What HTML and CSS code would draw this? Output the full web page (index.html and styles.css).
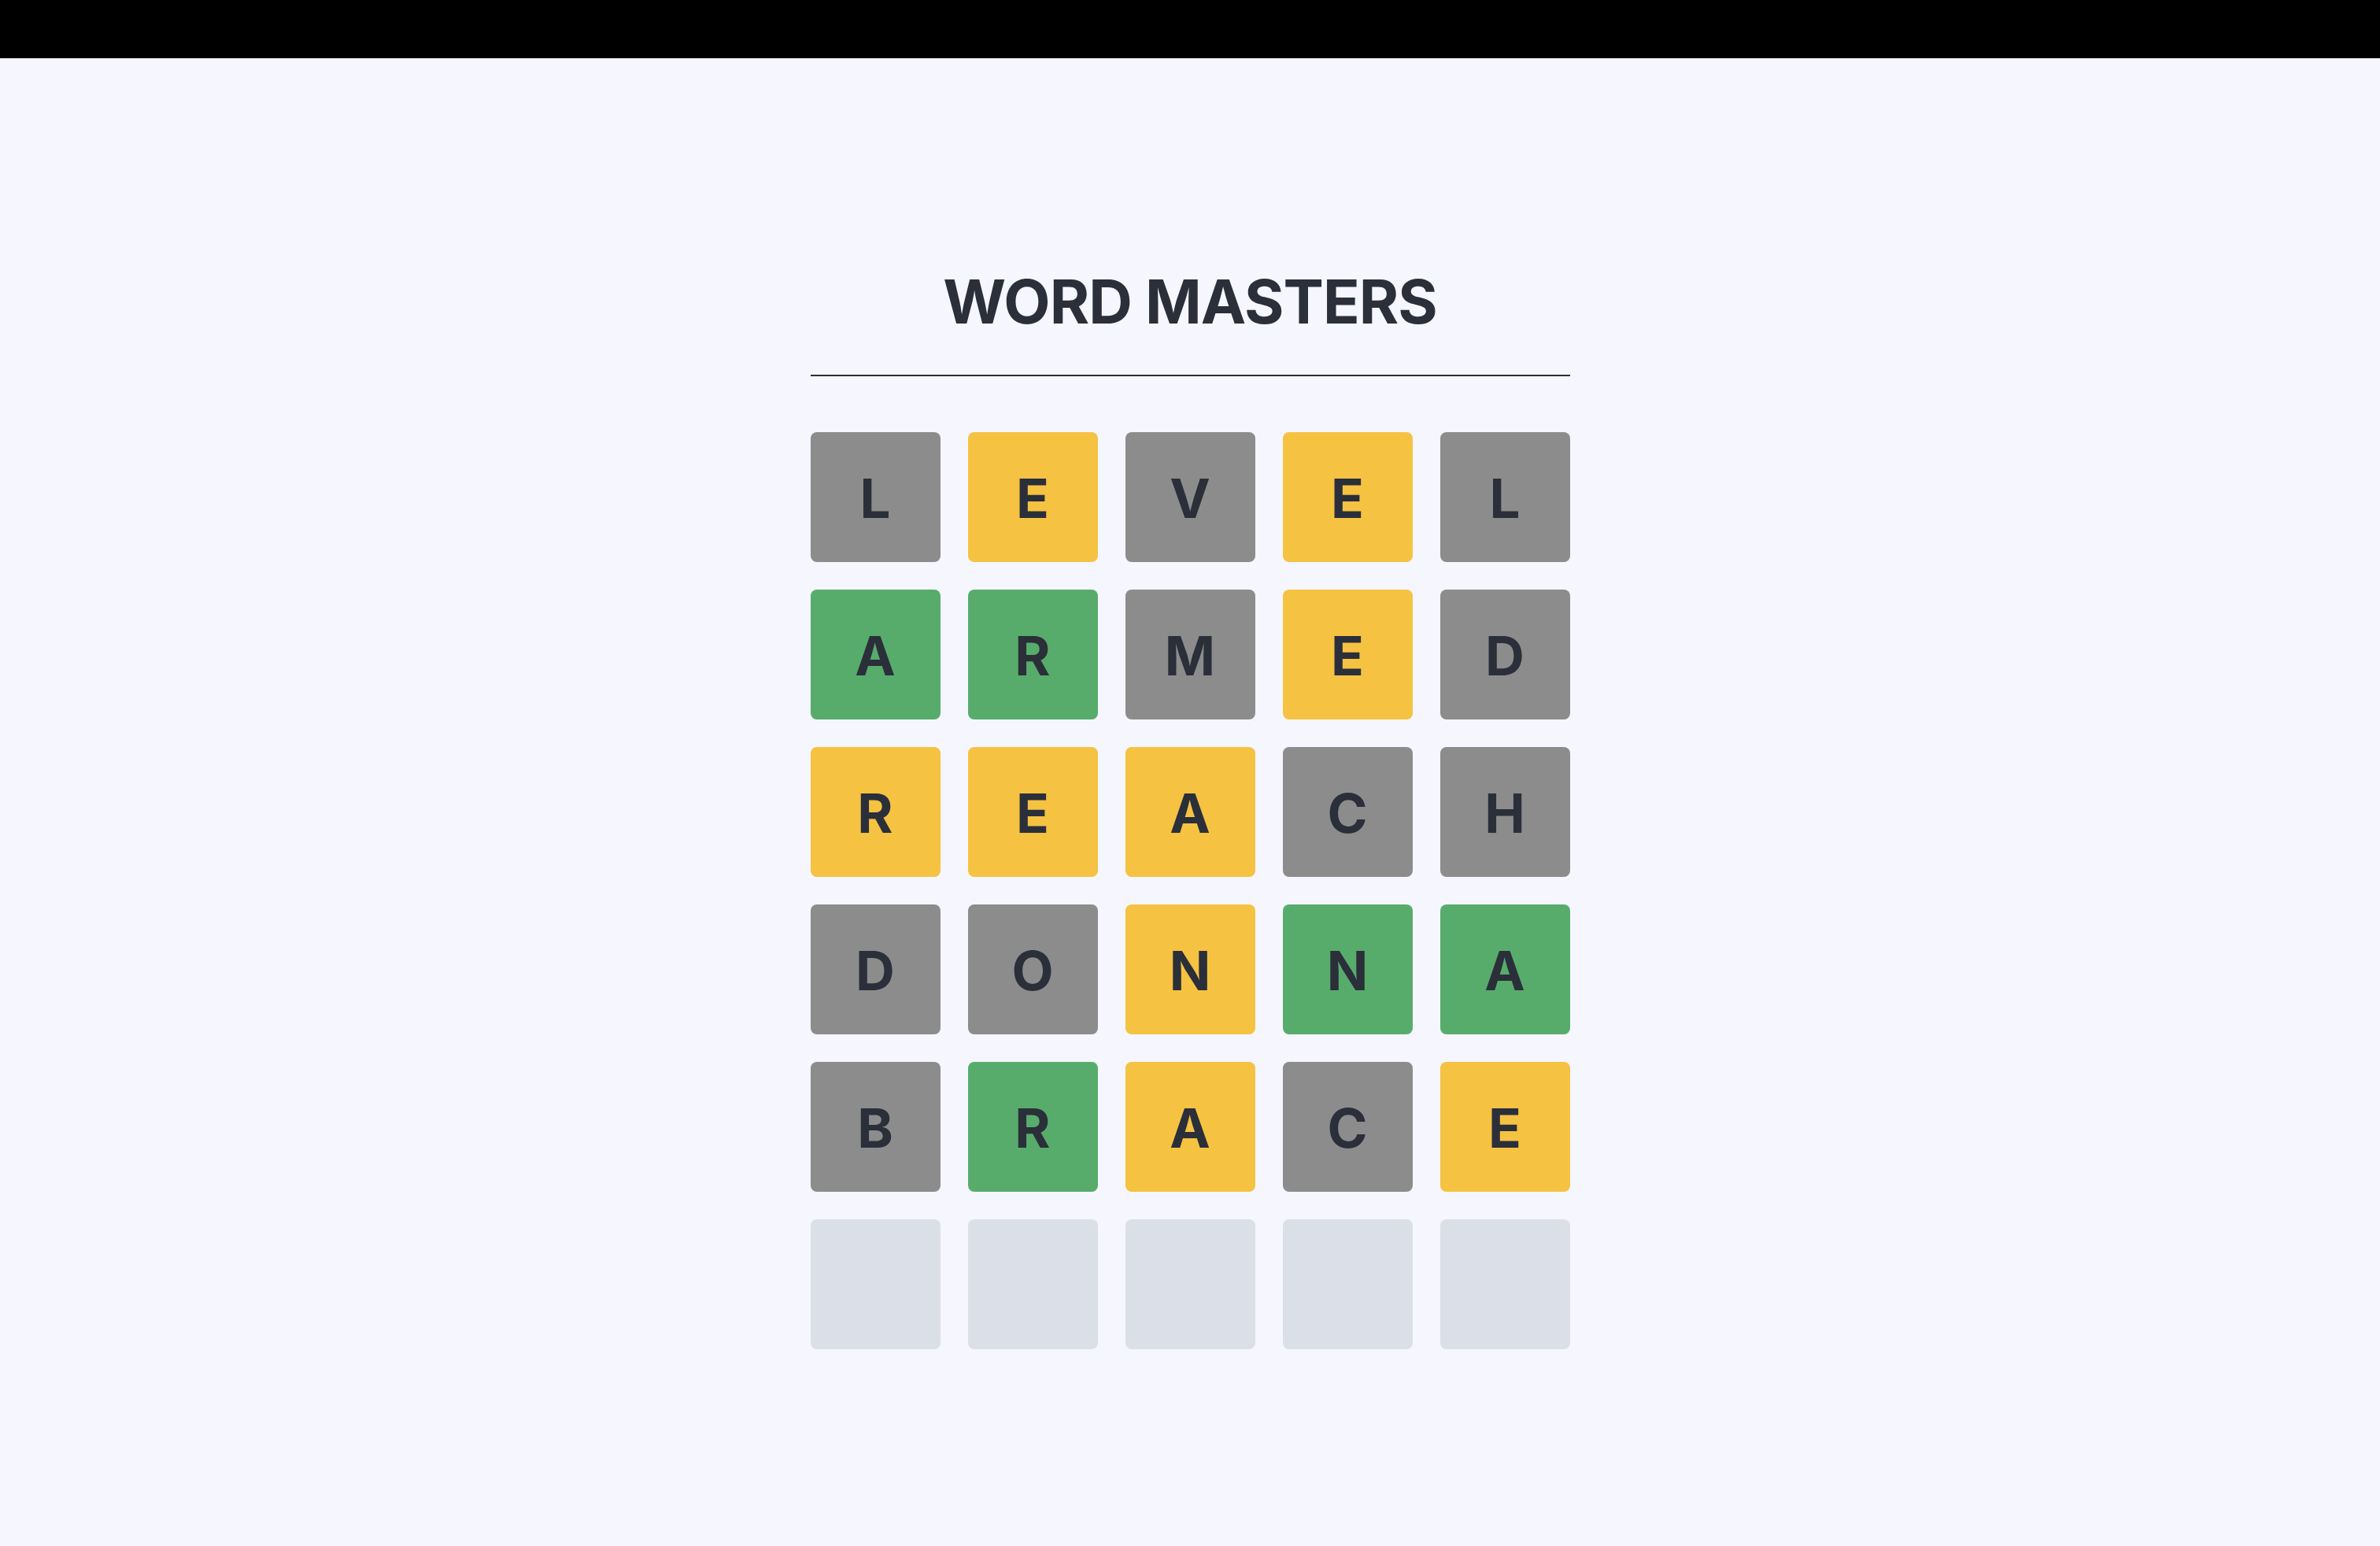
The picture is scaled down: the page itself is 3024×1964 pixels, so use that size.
FILE: index.html
```html
<!DOCTYPE html>
<html lang="en">
<head>
<meta charset="utf-8">
<title>Word Masters</title>
<link rel="stylesheet" href="styles.css">
</head>
<body>
<div class="topbar"></div>
<main class="game">
  <header class="brand">
    <h1 class="brand-title">WORD MASTERS</h1>
  </header>
  <div class="board">
    <div class="tile absent">L</div>
    <div class="tile present">E</div>
    <div class="tile absent">V</div>
    <div class="tile present">E</div>
    <div class="tile absent">L</div>

    <div class="tile correct">A</div>
    <div class="tile correct">R</div>
    <div class="tile absent">M</div>
    <div class="tile present">E</div>
    <div class="tile absent">D</div>

    <div class="tile present">R</div>
    <div class="tile present">E</div>
    <div class="tile present">A</div>
    <div class="tile absent">C</div>
    <div class="tile absent">H</div>

    <div class="tile absent">D</div>
    <div class="tile absent">O</div>
    <div class="tile present">N</div>
    <div class="tile correct">N</div>
    <div class="tile correct">A</div>

    <div class="tile absent">B</div>
    <div class="tile correct">R</div>
    <div class="tile present">A</div>
    <div class="tile absent">C</div>
    <div class="tile present">E</div>

    <div class="tile empty"></div>
    <div class="tile empty"></div>
    <div class="tile empty"></div>
    <div class="tile empty"></div>
    <div class="tile empty"></div>
  </div>
</main>
</body>
</html>
```

FILE: styles.css
```css
html, body {
  margin: 0;
  padding: 0;
}
body {
  background: #f5f6fe;
  color: #2a2f3a;
  font-family: Inter, "Noto Sans", sans-serif;
  min-height: 1964px;
}
.topbar {
  height: 74px;
  background: #000;
}
.game {
  width: 965px;
  margin: 0 auto;
  display: flex;
  flex-direction: column;
  padding-top: 271px;
}
.brand {
  border-bottom: 2px solid #2a2f3a;
  padding-bottom: 54px;
  text-align: center;
}
.brand-title {
  margin: 0;
  font-size: 77px;
  line-height: 1;
  font-weight: 700;
  letter-spacing: -1px;
}
.board {
  margin-top: 71px;
  display: grid;
  grid-template-columns: repeat(5, 165px);
  grid-auto-rows: 165px;
  gap: 35px;
}
.tile {
  border-radius: 8px;
  display: flex;
  align-items: center;
  justify-content: center;
  padding-top: 3px;
  box-sizing: border-box;
  font-size: 69px;
  font-weight: 700;
  line-height: 1;
  color: #2a2f3a;
}
.absent { background: #8c8c8c; }
.present { background: #f5c242; }
.correct { background: #58ac6b; }
.empty { background: #dbdfe7; }
```
